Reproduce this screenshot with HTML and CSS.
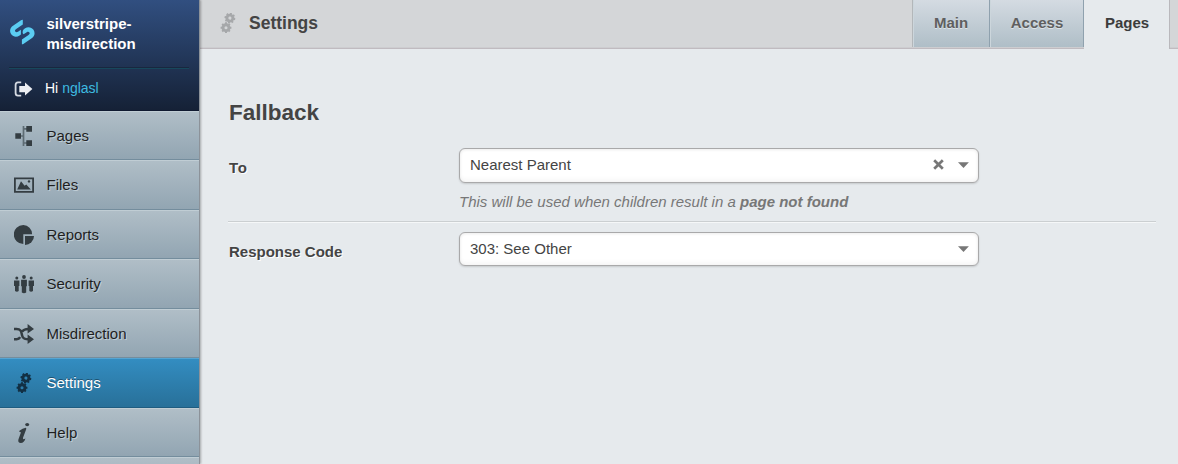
FILE: index.html
```html
<!DOCTYPE html>
<html lang="en">
<head>
<meta charset="utf-8">
<title>Settings</title>
<link rel="stylesheet" href="styles.css">
</head>
<body>
<svg class="defs" width="0" height="0">
  <defs>
    <g id="cog">
      <circle r="3" fill="none" stroke="currentColor" stroke-width="2.9"/>
      <path d="M0-5.4V-3.6M0 5.4V3.6M-5.4 0H-3.6M5.4 0H3.6M-3.8-3.8L-2.7-2.7M3.8 3.8L2.7 2.7M-3.8 3.8L-2.7 2.7M3.8-3.8L2.7-2.7" stroke="currentColor" stroke-width="2"/>
    </g>
    <symbol id="cogs" viewBox="0 0 20 20">
      <use href="#cog" transform="translate(11.9 5.1) rotate(12)"/>
      <use href="#cog" transform="translate(8 14.7)"/>
    </symbol>
  </defs>
</svg>
<div class="app">
  <aside class="sidebar">
    <header class="brand">
      <div class="brand-row">
        <svg class="logo" width="26" height="26" viewBox="0 0 26 26">
          <path d="M13.8 .8V5.6L7.2 10C5.9 10.9 5.7 11.8 6.3 12.6C6.9 13.4 7.9 13.5 9 12.8L11.9 10.8V15.6L10.6 16.5C7.7 18.4 4.2 18 2.2 15.2C.3 12.2 1 8.8 4 6.7L12 1.3Q12.9.7 13.8.8Z" fill="#5bcdf2"/>
          <path d="M12.9 25.2V20.4L19.5 16C20.8 15.1 21 14.2 20.4 13.4C19.8 12.6 18.8 12.5 17.7 13.2L14.6 15.3Q13.6 14.8 13.6 13.2Q13.6 11.1 14.8 10.2L16.1 9.3C19 7.4 22.5 8 24.5 10.8C26.4 13.8 25.7 17.2 22.7 19.3L14.7 24.7Q13.8 25.3 12.9 25.2Z" fill="#5bcdf2"/>
        </svg>
        <span class="site-name">silverstripe-<br>misdirection</span>
      </div>
      <div class="user-row">
        <svg class="logout" width="19" height="16" viewBox="0 0 19 16">
          <path d="M7.2 1.4H4Q1.6 1.4 1.6 4V12Q1.6 14.6 4 14.6H7.2" fill="none" stroke="#d5dae2" stroke-width="1.8"/>
          <path d="M5.3 4.9H11V1.4L18.4 8L11 14.6V11.2H5.3Z" fill="#eceef2"/>
        </svg>
        <span>Hi <a class="user">nglasl</a></span>
      </div>
    </header>
    <nav class="menu">
      <a class="item"><svg class="icon" viewBox="0 0 20 20"><path d="M9.5 0V20M6 10H10M9.5 2.8H13M9.5 17H13" fill="none" stroke="#5d6b73" stroke-width="1.7"/><path d="M1.3 7.2H7V12.7H1.3ZM12.3 0H18V5.8H12.3ZM12.3 14.2H18V20H12.3Z"/></svg>Pages</a>
      <a class="item"><svg class="icon" viewBox="0 0 20 20"><path d="M.9 3.4H19.1V16.9H.9Z" fill="none" stroke="#343d42" stroke-width="1.8"/><path d="M3.2 14.5L7 6.2L10.6 10.8L12.3 9.4L16.8 14.5Z"/><circle cx="15" cy="6.4" r="1.2"/></svg>Files</a>
      <a class="item"><svg class="icon" viewBox="0 0 20 20"><path d="M9.3 0A9.3 9.3 0 1 0 9.3 19V9.2H18.1A9.3 9.3 0 0 0 9.3 0Z"/><path d="M11 11H20A9 9 0 0 1 11 20Z"/></svg>Reports</a>
      <a class="item"><svg class="icon" viewBox="0 0 20 20"><circle cx="10" cy="3" r="1.9"/><circle cx="2.8" cy="4" r="1.5"/><circle cx="17.2" cy="4" r="1.5"/><path d="M7.1 5.7H12.9V12.3H12.2V18.5Q10 20 7.8 18.5V12.3H7.1ZM0 6.5H5.4V12H4.7V17Q3 18.6 1 17V12H0ZM14.6 6.5H20V12H19V17Q17 18.6 15.3 17V12H14.6Z"/></svg>Security</a>
      <a class="item"><svg class="icon" viewBox="0 0 20 20"><path d="M0 4.9H2.2C8.6 4.7 7 10 8.7 13Q9.9 15.2 14.5 15.2M0 15.2H2.6Q5 15.2 6.2 13.2M8.2 7.7Q9.5 4.9 14.5 4.9" fill="none" stroke="#343d42" stroke-width="2.5"/><path d="M13.6 0L20 4.9L13.6 9.6ZM13.6 10.5L20 15.2L13.6 20Z"/></svg>Misdirection</a>
      <a class="item active"><svg class="icon"><use href="#cogs"/></svg>Settings</a>
      <a class="item"><svg class="icon" viewBox="0 0 20 20"><ellipse cx="13.2" cy="1.6" rx="2" ry="1.6"/><path d="M5.4 7.8Q8.6 5.2 11.8 4.8Q12.6 5.2 12.1 6.4L9 14.8Q8.5 17.3 11.4 15.6Q10.2 20 6.8 20Q3.6 20 4.4 16.6L6.9 9.6Q6.8 8.6 5.4 9Z"/></svg>Help</a>
      <a class="item"></a>
    </nav>
  </aside>
  <main class="content">
    <header class="topbar">
      <h1 class="title"><svg class="title-icon"><use href="#cogs"/></svg>Settings</h1>
      <nav class="tabs">
        <a class="tab tab-main">Main</a>
        <a class="tab tab-access">Access</a>
        <a class="tab current">Pages</a>
      </nav>
    </header>
    <section class="form">
      <h2 class="heading">Fallback</h2>
      <div class="field field-to">
        <label class="label label-to">To</label>
        <div class="control">
          <div class="select select-to">
            <span class="value">Nearest Parent</span>
            <svg class="clear" width="11" height="11" viewBox="0 0 11 11"><path d="M1.2 1.2L9.8 9.8M9.8 1.2L1.2 9.8" stroke="#777" stroke-width="2.7"/></svg>
            <svg class="arrow" width="12" height="6" viewBox="0 0 12 6"><path d="M0 .3H10.9L5.5 6Z" fill="#777"/></svg>
          </div>
          <p class="hint">This will be used when children result in a <strong>page not found</strong></p>
        </div>
      </div>
      <div class="field field-code">
        <label class="label">Response Code</label>
        <div class="control">
          <div class="select select-code">
            <span class="value">303: See Other</span>
            <svg class="arrow" width="12" height="6" viewBox="0 0 12 6"><path d="M0 .3H10.9L5.5 6Z" fill="#777"/></svg>
          </div>
        </div>
      </div>
    </section>
  </main>
</div>
</body>
</html>
```
FILE: styles.css
```css
* { box-sizing: border-box; }
body {
  margin: 0;
  font: 15px/20px "Liberation Sans", Arial, sans-serif;
  color: #444;
  background: #e6eaed;
}
.defs { display: block; height: 0; }
.app { display: flex; height: 464px; overflow: hidden; }

.sidebar {
  flex: none;
  width: 200px;
  border-right: 1px solid #8c9299;
  box-shadow: 1px 0 2px rgba(0, 0, 0, .28);
  z-index: 1;
}
.brand {
  height: 111px;
  padding: 13px 10px 0 9px;
  background: linear-gradient(#314f80, #152136);
  border-bottom: 1px solid #101a30;
}
.brand-row {
  display: flex;
  height: 56px;
  border-bottom: 1px solid #17485c;
  box-shadow: 0 -1px 0 #19273f inset;
}
.logo { flex: none; margin: 6px 11.5px 0 0; }
.site-name { color: #fff; font-weight: bold; padding-top: 1px; }
.user-row { display: flex; padding: 9px 0 0 5px; color: #fff; font-size: 14px; }
.logout { margin: 3px 12px 0 0; }
.user { color: #3ebae0; }

.menu { height: 360px; overflow: hidden; }
.item {
  display: flex;
  align-items: center;
  height: 49px;
  padding: 1px 0 0 14px;
  color: #1f1f1f;
  background: linear-gradient(#b0bec7, #92a5b2);
  border-top: 1px solid #c0cdd4;
  border-bottom: 1px solid #748d9d;
  text-shadow: 1px 1px 0 #bfcdd5;
}
.item:nth-child(even) { height: 50px; padding-top: 0; }
.item.active {
  color: #fff;
  background: linear-gradient(#338dc1, #287099);
  border-top-color: #55a4d2;
  border-bottom-color: #1f5c80;
  text-shadow: 0 -1px 0 #1e5270;
}
.icon { width: 20px; height: 20px; margin-right: 12.5px; fill: #343d42; color: #123044; }

.content { flex: 1; min-width: 0; }
.topbar {
  display: flex;
  justify-content: space-between;
  height: 49px;
  padding-right: 8px;
  background: #d4d6d8;
  border-bottom: 1px solid #c0bbc0;
  box-shadow: inset 0 -1px 0 #cdcdd0;
}
.title { display: flex; margin: 0; padding: 13px 0 0 18px; font-size: 17.5px; line-height: 20px; }
.title-icon { width: 20px; height: 20px; margin-right: 11px; color: #a6a8aa; }
.tabs { display: flex; height: 49px; font-weight: bold; }
.tab {
  padding: 13px 0 0;
  height: 47px;
  text-align: center;
  color: #5f5f5f;
  background: linear-gradient(#d4dbe2, #afbec7);
  border-right: 1px solid #8fa1ae;
  box-shadow: inset 1px 0 0 #ccd6dc;
  text-shadow: 0 1px 0 #dde3e7;
}
.tab-main { width: 78px; border-left: 1px solid #b3b7ba; }
.tab-access { width: 94px; padding-left: 1px; }
.tab.current {
  width: 86px;
  height: 49px;
  padding-left: 1px;
  color: #3c3c3c;
  background: #e6eaed;
  border-right-color: #b9b8bc;
  box-shadow: none;
}

.form { padding: 50px 22px 0 28px; }
.heading { margin: 0 0 22px 1px; font-size: 22.5px; line-height: 27px; }
.field { display: flex; }
.field-to {
  height: 74px;
  border-bottom: 1px solid #cbcfd1;
  box-shadow: 0 1px 0 #f5f7f8;
}
.field-code { padding-top: 10px; }
.label {
  width: 231px;
  padding: 10px 0 0 1px;
  font-weight: bold;
  text-shadow: 1px 1px 0 #fff;
}
.label-to { letter-spacing: .6px; }
.select {
  display: flex;
  align-items: center;
  width: 520px;
  height: 35px;
  padding: 0 8px 0 10px;
  background: #fff;
  border: 1px solid #a9a9aa;
  border-radius: 6px;
  box-shadow: inset 0 1px 3px rgba(0, 0, 0, .08), inset 0 -3px 4px rgba(0, 0, 0, .035), 0 1px 2px rgba(0, 0, 0, .14);
}
.select-to { padding-bottom: 1px; }
.select-code { height: 34px; }
.value { flex: 1; }
.clear { margin: 0 14px 1px 0; }
.arrow { margin-bottom: 1px; }
.hint { margin: 9px 0 0; color: #777; font-style: italic; }
```
